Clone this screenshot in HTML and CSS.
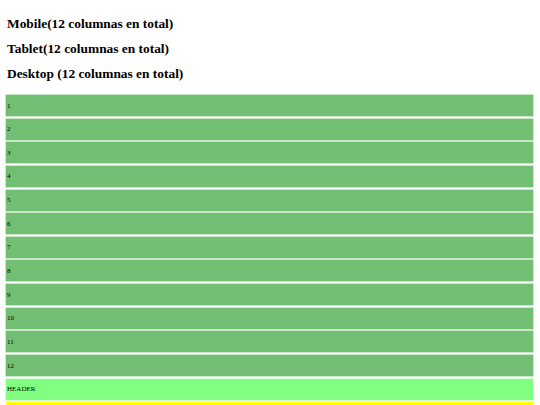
FILE: index.html
```html
<!DOCTYPE html>
<html lang="es">
<head>
<meta charset="utf-8">
<title>Grid</title>
<link rel="stylesheet" href="styles.css">
</head>
<body>
  <h2 class="title">Mobile(12 columnas en total)</h2>
  <h2 class="title">Tablet(12 columnas en total)</h2>
  <h2 class="title">Desktop (12 columnas en total)</h2>

  <div class="grid">
    <div class="col">1</div>
    <div class="col">2</div>
    <div class="col">3</div>
    <div class="col">4</div>
    <div class="col">5</div>
    <div class="col">6</div>
    <div class="col">7</div>
    <div class="col">8</div>
    <div class="col">9</div>
    <div class="col">10</div>
    <div class="col">11</div>
    <div class="col">12</div>
    <div class="col header">HEADER</div>
    <div class="col main">MAIN</div>
  </div>
</body>
</html>
```

FILE: styles.css
```css
html, body {
  margin: 0;
  padding: 0;
  background: #ffffff;
}

body {
  padding: 11px 7px 0 6px;
  font-family: "Liberation Serif", "Times New Roman", serif;
  color: #000;
  overflow: hidden;
}

.title {
  margin: 0;
  padding-left: 1px;
  height: 25px;
  font-size: 13.4px;
  line-height: 25px;
  font-weight: bold;
}

.grid {
  display: flex;
  flex-direction: column;
  gap: 2.65px;
  margin-top: 9px;
}

.col {
  height: 21px;
  display: flex;
  align-items: center;
  padding-left: 1px;
  font-size: 7px;
  background: #72bf73;
  box-shadow: 0 0 0 0.6px #a8d8a8;
}

.header {
  background: #80ff80;
  box-shadow: 0 0 0 0.6px #c0ffc0;
}

.main {
  background: #ffff00;
  box-shadow: none;
}
```
